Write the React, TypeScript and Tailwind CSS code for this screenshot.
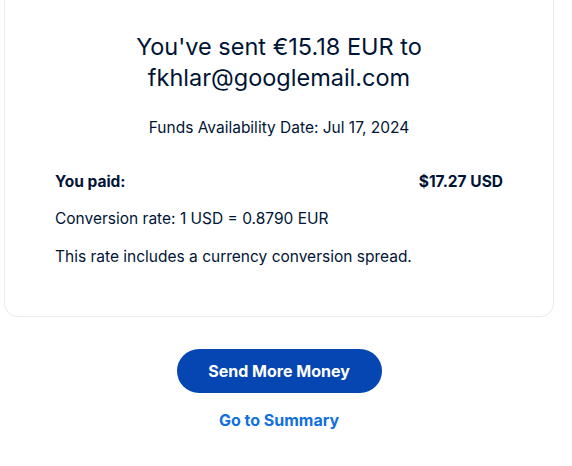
export default function App() {
  return (
    <div
      className="min-h-[466px] bg-white text-[#001435]"
      style={{ fontFamily: 'Inter, "Noto Sans", sans-serif' }}
    >
      <div className="ml-[4px] w-[550px] rounded-b-[14px] border-x border-b border-[#ebebeb] px-[50px] pt-[31px] pb-[48px]">
        <h1 className="text-center text-[23.5px] leading-[31px] font-normal">
          You've sent €15.18 EUR to
          <br />
          fkhlar@googlemail.com
        </h1>
        <p className="mt-[25px] text-center text-[15.5px] leading-[20px]">
          Funds Availability Date: Jul 17, 2024
        </p>
        <div className="mt-[33px] flex justify-between text-[15.5px] leading-[22px] font-bold">
          <span>You paid:</span>
          <span>$17.27 USD</span>
        </div>
        <p className="mt-[15px] text-[15.5px] leading-[22px]">Conversion rate: 1 USD = 0.8790 EUR</p>
        <p className="mt-[16px] text-[15.5px] leading-[22px]">
          This rate includes a currency conversion spread.
        </p>
      </div>
      <div className="ml-[4px] flex w-[550px] flex-col items-center pt-[32px]">
        <button className="h-[44px] w-[205px] rounded-full bg-[#0546b2] text-[16px] font-bold text-white">
          Send More Money
        </button>
        <a className="mt-[16px] text-[16px] leading-[22px] font-bold text-[#1170de]">Go to Summary</a>
      </div>
    </div>
  );
}
